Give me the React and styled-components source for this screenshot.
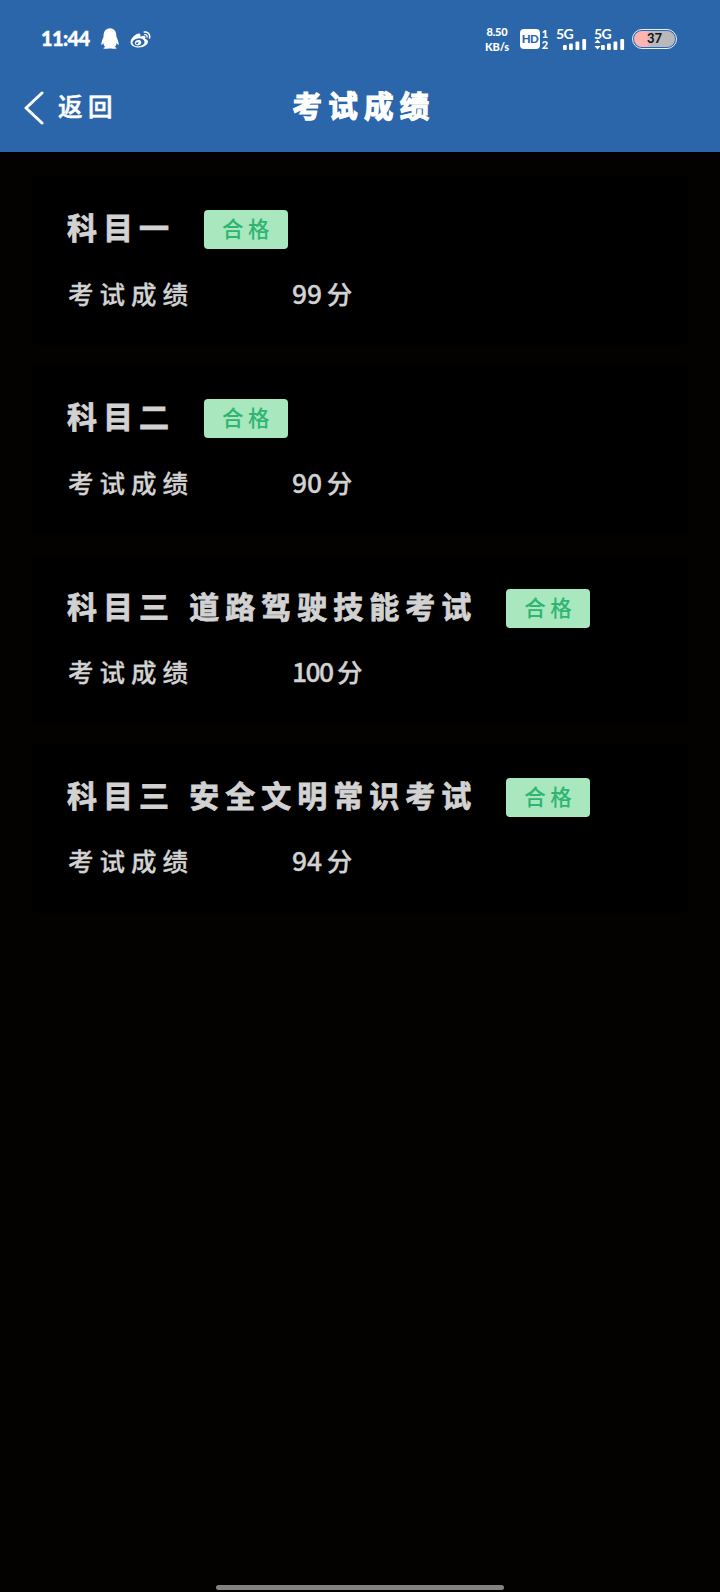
import React from 'react';
import styled, { createGlobalStyle } from 'styled-components';
import { FaQq, FaWeibo } from 'react-icons/fa';

const GlobalStyle = createGlobalStyle`
  * {
    box-sizing: border-box;
  }

  body {
    margin: 0;
    background: #030200;
    font-family: 'Noto Sans CJK SC', sans-serif;
  }
`;

const Page = styled.div`
  display: flex;
  flex-direction: column;
  width: 720px;
  height: 1592px;
  overflow: hidden;
`;

const Header = styled.header`
  height: 152px;
  flex: none;
  background: #2c66aa;
  color: #fff;
`;

const StatusBar = styled.div`
  height: 64px;
  display: flex;
  align-items: center;
  justify-content: space-between;
  padding: 14px 43px 0 41px;
`;

const StatusGroup = styled.div`
  display: flex;
  align-items: center;
`;

const Clock = styled.div`
  width: 49px;
  margin: 0 11px 3px 0;
  font-family: 'Lato', sans-serif;
  font-size: 20px;
  font-weight: 900;
  line-height: 20px;
  letter-spacing: -0.6px;
  white-space: nowrap;
  -webkit-text-stroke: 0.4px currentColor;
`;

const QqIcon = styled(FaQq)`
  width: 18px;
  height: 21px;
  margin: 0 11px 1px 0;
`;

const WeiboIcon = styled(FaWeibo)`
  width: 21px;
  height: 20px;
  margin-top: 1px;
`;

const Speed = styled.div`
  width: 26px;
  margin: 0 10px 0 0;
  display: flex;
  flex-direction: column;
  align-items: center;
  font-family: 'Lato', sans-serif;
  font-size: 11px;
  font-weight: 900;
  line-height: 15px;
  letter-spacing: -0.2px;
  white-space: nowrap;
`;

const HdBox = styled.div`
  width: 20px;
  height: 20px;
  border-radius: 4px;
  background: #fff;
  color: #2c66aa;
  font-family: 'Lato', sans-serif;
  font-size: 11.5px;
  font-weight: 900;
  line-height: 20px;
  letter-spacing: -0.5px;
  text-align: center;
`;

const SimNumbers = styled.div`
  width: 8px;
  margin: 0 7px 0 1px;
  font-family: 'Lato', sans-serif;
  font-size: 11px;
  font-weight: 900;
  line-height: 11px;
  text-align: center;
`;

const Signal = styled.div`
  width: 31px;
  height: 21px;
  margin-right: 7px;
`;

const NetworkType = styled.div`
  height: 10px;
  font-family: 'Lato', sans-serif;
  font-size: 14px;
  font-weight: 700;
  line-height: 10px;
  letter-spacing: -0.5px;
`;

const SignalBars = styled.svg`
  display: block;
  width: 31px;
  height: 11px;
`;

const Battery = styled.div`
  width: 45px;
  height: 20px;
  padding: 1px;
  border: 1.5px solid #e8f1fb;
  border-radius: 10px;
`;

const BatteryLevel = styled.div`
  height: 100%;
  border-radius: 8px;
  background: linear-gradient(90deg, #ffb4b4 0 30%, #b9b9bb 42%);
  color: #111;
  font-family: 'Lato', sans-serif;
  font-size: 13px;
  font-weight: 700;
  line-height: 15px;
  text-align: center;
`;

const NavBar = styled.nav`
  height: 88px;
  display: grid;
  grid-template-columns: 1fr auto 1fr;
  align-items: center;
  padding: 0 16px 4px 24px;
`;

const Back = styled.div`
  display: flex;
  align-items: center;
  gap: 14px;
  font-size: 24.5px;
  font-weight: 500;
  line-height: 34px;
  letter-spacing: 5.5px;
  -webkit-text-stroke: 0.5px currentColor;
`;

const BackLabel = styled.span`
  margin-bottom: 1px;
`;

const BackArrow = styled.svg`
  width: 20px;
  height: 34px;
  margin-top: 3px;
`;

const PageTitle = styled.h1`
  margin: 0 0 4px;
  font-size: 29.5px;
  font-weight: 700;
  line-height: 40px;
  letter-spacing: 6.2px;
  -webkit-text-stroke: 1.2px currentColor;
`;

const CardList = styled.main`
  flex: 1;
  display: flex;
  flex-direction: column;
  gap: 20px;
  padding: 24px 32px 0;
`;

const Card = styled.section`
  height: 169.3px;
  padding: 27px 35px 0;
  border-radius: 6px;
  background: #000;
  color: #d2d2d2;
`;

const CardHead = styled.div`
  display: flex;
  align-items: center;
  height: 46px;
`;

const Subject = styled.h2`
  margin: 0;
  font-size: 30px;
  font-weight: 700;
  line-height: 46px;
  letter-spacing: 6px;
  word-spacing: 1.5px;
  white-space: nowrap;
  -webkit-text-stroke: 0.8px currentColor;
`;

const Badge = styled.span`
  width: 84px;
  height: 39px;
  margin: 7px 0 0 29px;
  padding-left: 4px;
  border-radius: 4px;
  background: #a9e7bf;
  color: #2fb572;
  font-size: 21.5px;
  font-weight: 500;
  line-height: 36px;
  letter-spacing: 4.5px;
  text-align: center;
`;

const ScoreRow = styled.div`
  display: flex;
  align-items: center;
  height: 40px;
  margin-top: 23.5px;
  font-size: 25.5px;
  font-weight: 500;
  line-height: 40px;
`;

const ScoreLabel = styled.span`
  width: 225px;
  padding-left: 1px;
  letter-spacing: 6px;
  -webkit-text-stroke: 0.3px currentColor;
`;

const ScoreValue = styled.span`
  display: flex;
  gap: 4.5px;
  -webkit-text-stroke: 0.3px currentColor;
`;

const ScoreNumber = styled.span`
  font-size: 26.5px;
  letter-spacing: ${({ $tight }) => ($tight ? '-1.6px' : '0')};
`;

const BottomBar = styled.div`
  width: 288px;
  height: 5px;
  margin: 0 auto 2px;
  flex: none;
  border-radius: 3px;
  background: #838280;
`;

const exams = [
  { subject: '科目一', score: 99, status: '合格' },
  { subject: '科目二', score: 90, status: '合格' },
  { subject: '科目三 道路驾驶技能考试', score: 100, status: '合格' },
  { subject: '科目三 安全文明常识考试', score: 94, status: '合格' },
];

const NetworkSignal = ({ active }) => (
  <Signal>
    <NetworkType>5G</NetworkType>
    <SignalBars viewBox='0 0 31 11' fill='#fff'>
      {active ? <path d='M0.5 4L3.5 0.5L6.5 4ZM0.5 7L3.5 10.5L6.5 7Z' /> : null}
      <rect x='7' y='6' width='3.8' height='5' rx='1' />
      <rect x='13' y='4.5' width='3.8' height='6.5' rx='1' />
      <rect x='19.5' y='2.5' width='3.8' height='8.5' rx='1' />
      <rect x='26.3' y='0' width='3.8' height='11' rx='1' />
    </SignalBars>
  </Signal>
);

const ExamCard = ({ exam }) => (
  <Card>
    <CardHead>
      <Subject>{exam.subject}</Subject>
      <Badge>{exam.status}</Badge>
    </CardHead>
    <ScoreRow>
      <ScoreLabel>考试成绩</ScoreLabel>
      <ScoreValue>
        <ScoreNumber $tight={exam.score >= 100}>{exam.score}</ScoreNumber>
        <span>分</span>
      </ScoreValue>
    </ScoreRow>
  </Card>
);

const App = () => (
  <>
    <GlobalStyle />
    <Page>
      <Header>
        <StatusBar>
          <StatusGroup>
            <Clock>11:44</Clock>
            <QqIcon />
            <WeiboIcon />
          </StatusGroup>
          <StatusGroup>
            <Speed>
              <div>8.50</div>
              <div>KB/s</div>
            </Speed>
            <HdBox>HD</HdBox>
            <SimNumbers>
              <div>1</div>
              <div>2</div>
            </SimNumbers>
            <NetworkSignal />
            <NetworkSignal active />
            <Battery>
              <BatteryLevel>37</BatteryLevel>
            </Battery>
          </StatusGroup>
        </StatusBar>
        <NavBar>
          <Back>
            <BackArrow viewBox='0 0 20 34' fill='none' stroke='#fff' strokeWidth='3'>
              <path d='M18 2L2 17L18 32' strokeLinecap='round' strokeLinejoin='round' />
            </BackArrow>
            <BackLabel>返回</BackLabel>
          </Back>
          <PageTitle>考试成绩</PageTitle>
        </NavBar>
      </Header>
      <CardList>
        {exams.map((exam) => (
          <ExamCard key={exam.subject} exam={exam} />
        ))}
      </CardList>
      <BottomBar />
    </Page>
  </>
);

export default App;
